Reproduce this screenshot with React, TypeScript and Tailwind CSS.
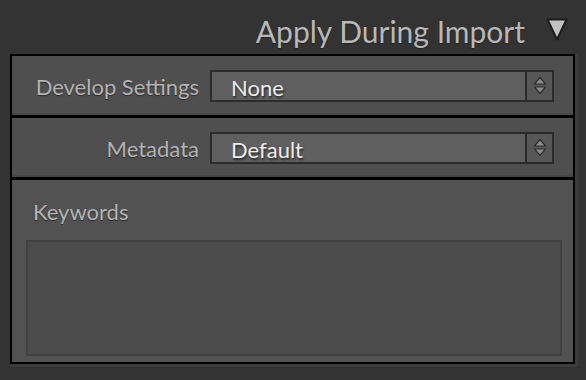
const font = { fontFamily: "Lato, 'Open Sans', sans-serif" };

function Stepper() {
  return (
    <div className="flex h-full w-[27px] items-center justify-center border-l-2 border-[#2b2b2b] bg-[#575757]">
      <svg width="14" height="20" viewBox="0 0 14 20">
        <path d="M7 1.5 L12.5 8 L1.5 8 Z" fill="#8c8c8c" stroke="#2e2e2e" strokeWidth="1.2" strokeLinejoin="round" />
        <path d="M1.5 11 L12.5 11 L7 17.5 Z" fill="#8c8c8c" stroke="#2e2e2e" strokeWidth="1.2" strokeLinejoin="round" />
      </svg>
    </div>
  );
}

function PopupRow({ label, value }: { label: string; value: string }) {
  return (
    <div className="flex h-[59px] items-start border-b-2 border-[#474747] bg-[#4f4f4f] pt-[14px]">
      <div
        className="w-[198px] pr-[11px] pt-[5px] text-right text-[22px] leading-[24px] text-[#b4b4b4]"
        style={{ textShadow: "0 1px 1px #2a2a2a" }}
      >
        {label}
      </div>
      <div className="flex h-[32px] w-[344px] border-2 border-[#2b2b2b] bg-[#5f5f5f]">
        <div
          className="flex-1 pl-[19px] pt-[4px] text-[22px] leading-[24px] text-[#ececec]"
          style={{ textShadow: "1px 2px 2px #2a2a2a" }}
        >
          {value}
        </div>
        <Stepper />
      </div>
    </div>
  );
}

export default function App() {
  return (
    <div className="h-[380px] w-[586px] overflow-hidden bg-[#333333]" style={font}>
      <div className="flex h-[54px] items-start justify-end pr-[18px] pt-[14px]">
        <span
          className="text-[30px] leading-[34px] text-[#b8b8b8]"
          style={{ textShadow: "0 1px 1px #222" }}
        >
          Apply During Import
        </span>
        <svg className="ml-[21px] mt-[4px]" width="22" height="23" viewBox="0 0 22 23">
          <path d="M1.5 1.5 L20.5 1.5 L11 21.5 Z" fill="#c2c2c2" stroke="#1c1c1c" strokeWidth="2" strokeLinejoin="round" />
        </svg>
      </div>
      <div className="ml-[10px] w-[568px] bg-[#3c3c3c] pb-[3px] pr-[3px]">
        <div className="flex flex-col gap-[1px] border-2 border-black bg-black">
          <PopupRow label="Develop Settings" value="None" />
          <div className="h-[1px] bg-black" />
          <PopupRow label="Metadata" value="Default" />
          <div className="h-[1px] bg-black" />
          <div className="flex h-[182px] flex-col bg-[#525252] pb-[6px] pl-[14px] pr-[11px]">
            <div
              className="pl-[7px] pt-[20px] text-[22px] leading-[24px] text-[#b4b4b4]"
              style={{ textShadow: "0 1px 1px #2a2a2a" }}
            >
              Keywords
            </div>
            <div className="mt-[16px] flex-1 border-2 border-[#414141] bg-[#4c4c4c]" />
          </div>
        </div>
      </div>
    </div>
  );
}
